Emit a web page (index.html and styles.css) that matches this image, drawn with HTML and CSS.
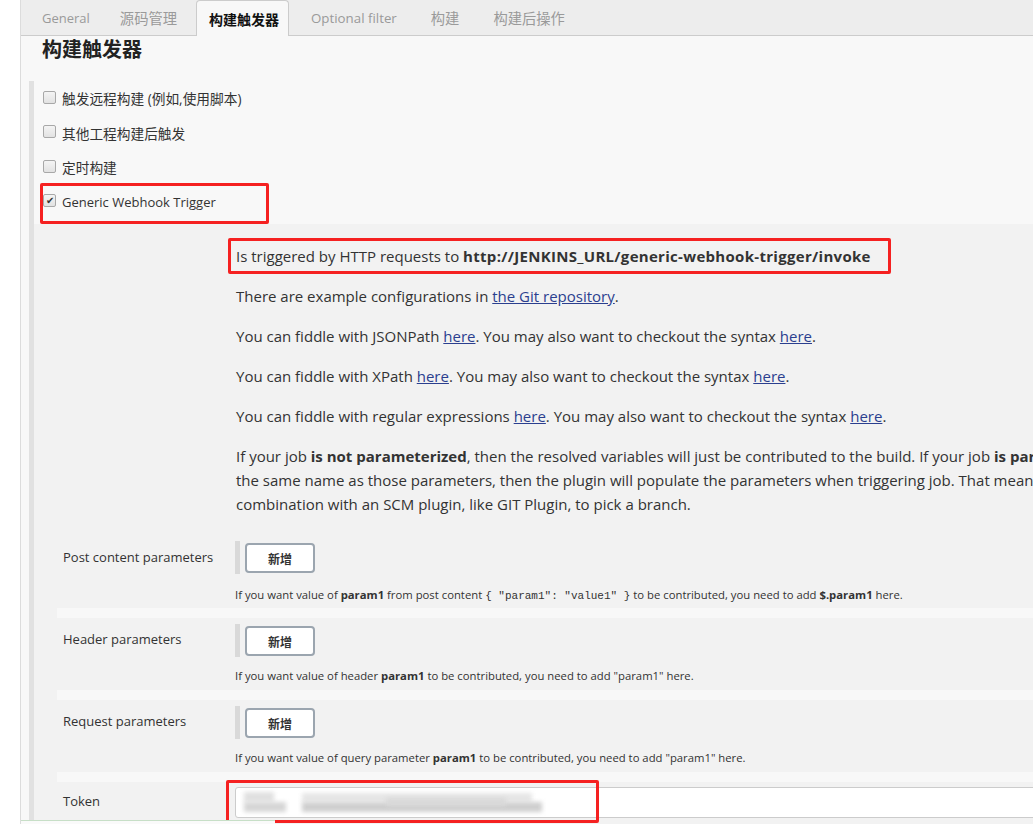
FILE: index.html
```html
<!DOCTYPE html>
<html lang="zh-CN">
<head>
<meta charset="utf-8">
<title>构建触发器</title>
<link rel="stylesheet" href="styles.css">
</head>
<body>
<div class="page">
  <div class="tabs">
    <div class="tab">General</div>
    <div class="tab cjk">源码管理</div>
    <div class="tab cjk active">构建触发器</div>
    <div class="tab wide">Optional filter</div>
    <div class="tab cjk wide">构建</div>
    <div class="tab cjk">构建后操作</div>
  </div>
  <h2 class="heading">构建触发器</h2>
  <div class="section">
    <div class="cb-row cjk"><span class="cb"></span><span>触发远程构建 (例如,使用脚本)</span></div>
    <div class="cb-row cjk"><span class="cb"></span><span>其他工程构建后触发</span></div>
    <div class="cb-row cjk"><span class="cb"></span><span>定时构建</span></div>
    <div class="cb-row marked"><span class="cb checked">✔</span><span class="latin">Generic Webhook Trigger</span></div>
    <div class="nested">
      <div class="desc">
        <p class="first">Is triggered by HTTP requests to <b>http://JENKINS_URL/generic-webhook-trigger/invoke</b></p>
        <p>There are example configurations in <a href="#">the Git repository</a>.</p>
        <p>You can fiddle with JSONPath <a href="#">here</a>. You may also want to checkout the syntax <a href="#">here</a>.</p>
        <p>You can fiddle with XPath <a href="#">here</a>. You may also want to checkout the syntax <a href="#">here</a>.</p>
        <p>You can fiddle with regular expressions <a href="#">here</a>. You may also want to checkout the syntax <a href="#">here</a>.</p>
        <p class="long">If your job <b>is not parameterized</b>, then the resolved variables will just be contributed to the build. If your job <b>is parameterized</b>, and you resolve variables that have<br>the same name as those parameters, then the plugin will populate the parameters when triggering job. That means you can, for example, use the parameters in<br>combination with an SCM plugin, like GIT Plugin, to pick a branch.</p>
      </div>
      <div class="params">
        <div class="param first-param">
          <div class="label">Post content parameters</div>
          <div class="content">
            <div class="btn-wrap"><button class="btn">新增</button></div>
            <div class="help">If you want value of <b>param1</b> from post content <code>{ "param1": "value1" }</code> to be contributed, you need to add <b>$.param1</b> here.</div>
          </div>
        </div>
        <div class="param">
          <div class="label">Header parameters</div>
          <div class="content">
            <div class="btn-wrap"><button class="btn">新增</button></div>
            <div class="help">If you want value of header <b>param1</b> to be contributed, you need to add "param1" here.</div>
          </div>
        </div>
        <div class="param">
          <div class="label">Request parameters</div>
          <div class="content">
            <div class="btn-wrap"><button class="btn">新增</button></div>
            <div class="help">If you want value of query parameter <b>param1</b> to be contributed, you need to add "param1" here.</div>
          </div>
        </div>
        <div class="param token">
          <div class="label">Token</div>
          <div class="content">
            <div class="input">
              <span class="blur b1"></span><span class="blur b2"></span><span class="blur b3"></span><span class="blur b4"></span><span class="blur b5"></span>
            </div>
          </div>
        </div>
      </div>
    </div>
  </div>
  <div class="footer-edge"></div>
</div>
</body>
</html>
```
FILE: styles.css
```css
html, body {
  margin: 0;
  padding: 0;
  background: #ffffff;
  overflow: hidden;
  height: 824px;
}
body {
  font-family: "Open Sans", "Noto Sans CJK SC", sans-serif;
  color: #333;
}
.page {
  margin-left: 20px;
  border-left: 1px solid #dcdcdc;
  background: #f8f8f8;
  height: 824px;
  width: 1100px;
  position: relative;
}
.tabs {
  display: flex;
  height: 35px;
  background: #ededed;
  border-bottom: 1px solid #cccccc;
  padding-left: 10px;
  align-items: stretch;
}
.tab {
  padding: 0 11px;
  margin-right: 8px;
  font-size: 13px;
  color: #9a9a9a;
  display: flex;
  align-items: center;
  font-family: "Open Sans", "Noto Sans CJK SC", sans-serif;
}
.tab.wide {
  margin-right: 12px;
  font-size: 13.3px;
}
.tab.cjk {
  font-size: 14.3px;
}
.tab.active {
  background: #f8f8f8;
  border: 1px solid #cccccc;
  border-bottom: none;
  border-radius: 4px 4px 0 0;
  margin-bottom: -1px;
  color: #111;
  font-weight: bold;
  font-size: 14px;
  padding: 0 9px 0 12px;
  margin-right: 11px;
}
.heading {
  margin: 1px 0 0 21px;
  font-size: 20px;
  line-height: 24px;
  font-weight: bold;
  color: #222;
  font-family: "Noto Sans CJK SC", sans-serif;
}
.section {
  margin: 20px 0 0 8px;
  border-left: 5px solid #e1e1e1;
  height: 760px;
}
.cb-row {
  display: flex;
  align-items: center;
  height: 34.5px;
  padding-left: 9px;
  font-size: 13px;
  color: #333;
  gap: 6px;
  position: relative;
}
.cb-row.cjk {
  font-size: 13.7px;
}
.cb-row .latin {
  font-family: "Open Sans", sans-serif;
}
.cb {
  width: 11px;
  height: 11px;
  border: 1px solid #a8a8a8;
  border-radius: 2px;
  background: linear-gradient(#f4f4f4, #e2e2e2);
  font-size: 10px;
  line-height: 11px;
  text-align: center;
  color: #333;
  margin-top: -2px;
  flex: none;
}
.marked::after {
  content: "";
  position: absolute;
  left: 6px;
  top: -2px;
  width: 223px;
  height: 35px;
  border: 3px solid #f52121;
  border-radius: 2px;
}
.nested {
  margin-top: 5px;
  background: #f2f2f2;
  padding-top: 20px;
  height: 600px;
}
.desc {
  padding-left: 202px;
  padding-bottom: 2px;
  font-size: 15px;
  line-height: 24px;
  white-space: nowrap;
}
.desc p {
  margin: 0 0 16px 0;
}
.desc p.first {
  width: fit-content;
  position: relative;
}
.desc p.first b {
  letter-spacing: 0.3px;
}
.desc p.first::after {
  content: "";
  position: absolute;
  left: -8px;
  right: -20px;
  top: -6px;
  bottom: -6px;
  border: 3px solid #f52121;
  border-radius: 2px;
}
.desc a {
  color: #2b3f8f;
  text-decoration: underline;
}
.params {
  margin-left: 23px;
}
.param {
  display: grid;
  grid-template-columns: 178px 1fr;
  padding: 6px 0 7px;
  border-bottom: 10px solid #f8f8f8;
}
.param.first-param {
  padding-top: 7px;
  padding-bottom: 4px;
}
.param.first-param .label {
  padding-top: 7px;
}
.param.first-param .help {
  margin-top: 13px;
}
.label {
  padding: 6px 0 0 6px;
  font-size: 13px;
  line-height: 18px;
  color: #333;
}
.btn-wrap {
  border-left: 5px solid #d9d9d9;
  padding: 2px 0 1px 5px;
  width: fit-content;
}
.btn {
  display: block;
  width: 70px;
  height: 30px;
  background: #fff;
  border: 2px solid #9ba5af;
  border-radius: 4px;
  font-family: "Noto Sans CJK SC", sans-serif;
  font-size: 12px;
  font-weight: bold;
  color: #333;
  padding: 0;
}
.help {
  margin-top: 11px;
  font-size: 11.3px;
  line-height: 15px;
  color: #333;
  white-space: nowrap;
}
.help code {
  font-family: "Liberation Mono", monospace;
  font-size: 11px;
}
.param.token {
  border-bottom: none;
  padding-top: 5px;
}
.param.token .label {
  padding-top: 5px;
}
.input {
  position: relative;
  height: 29px;
  border: 1px solid #cccccc;
  border-radius: 3px;
  background: #fff;
  width: 900px;
  box-sizing: content-box;
}
.input::after {
  content: "";
  position: absolute;
  left: -10px;
  top: -8px;
  width: 367px;
  height: 37px;
  border: 3px solid #f52121;
  border-radius: 2px;
}
.blur {
  position: absolute;
  filter: blur(2px);
}
.b1 { left: 8px; top: 4px; width: 30px; height: 10px; background: #e0e0e0; }
.b2 { left: 8px; top: 14px; width: 42px; height: 10px; background: #d6d6d6; }
.b3 { left: 66px; top: 5px; width: 230px; height: 9px; background: #e6e6e6; }
.b4 { left: 66px; top: 14px; width: 240px; height: 10px; background: #cfcfcf; }
.b5 { left: 150px; top: 10px; width: 120px; height: 8px; background: #d9d9d9; }
.footer-edge {
  position: absolute;
  left: 0;
  bottom: 0;
  width: 254px;
  height: 3px;
  border-top: 1px solid #c7dfc7;
  background: #fafafa;
}
```
